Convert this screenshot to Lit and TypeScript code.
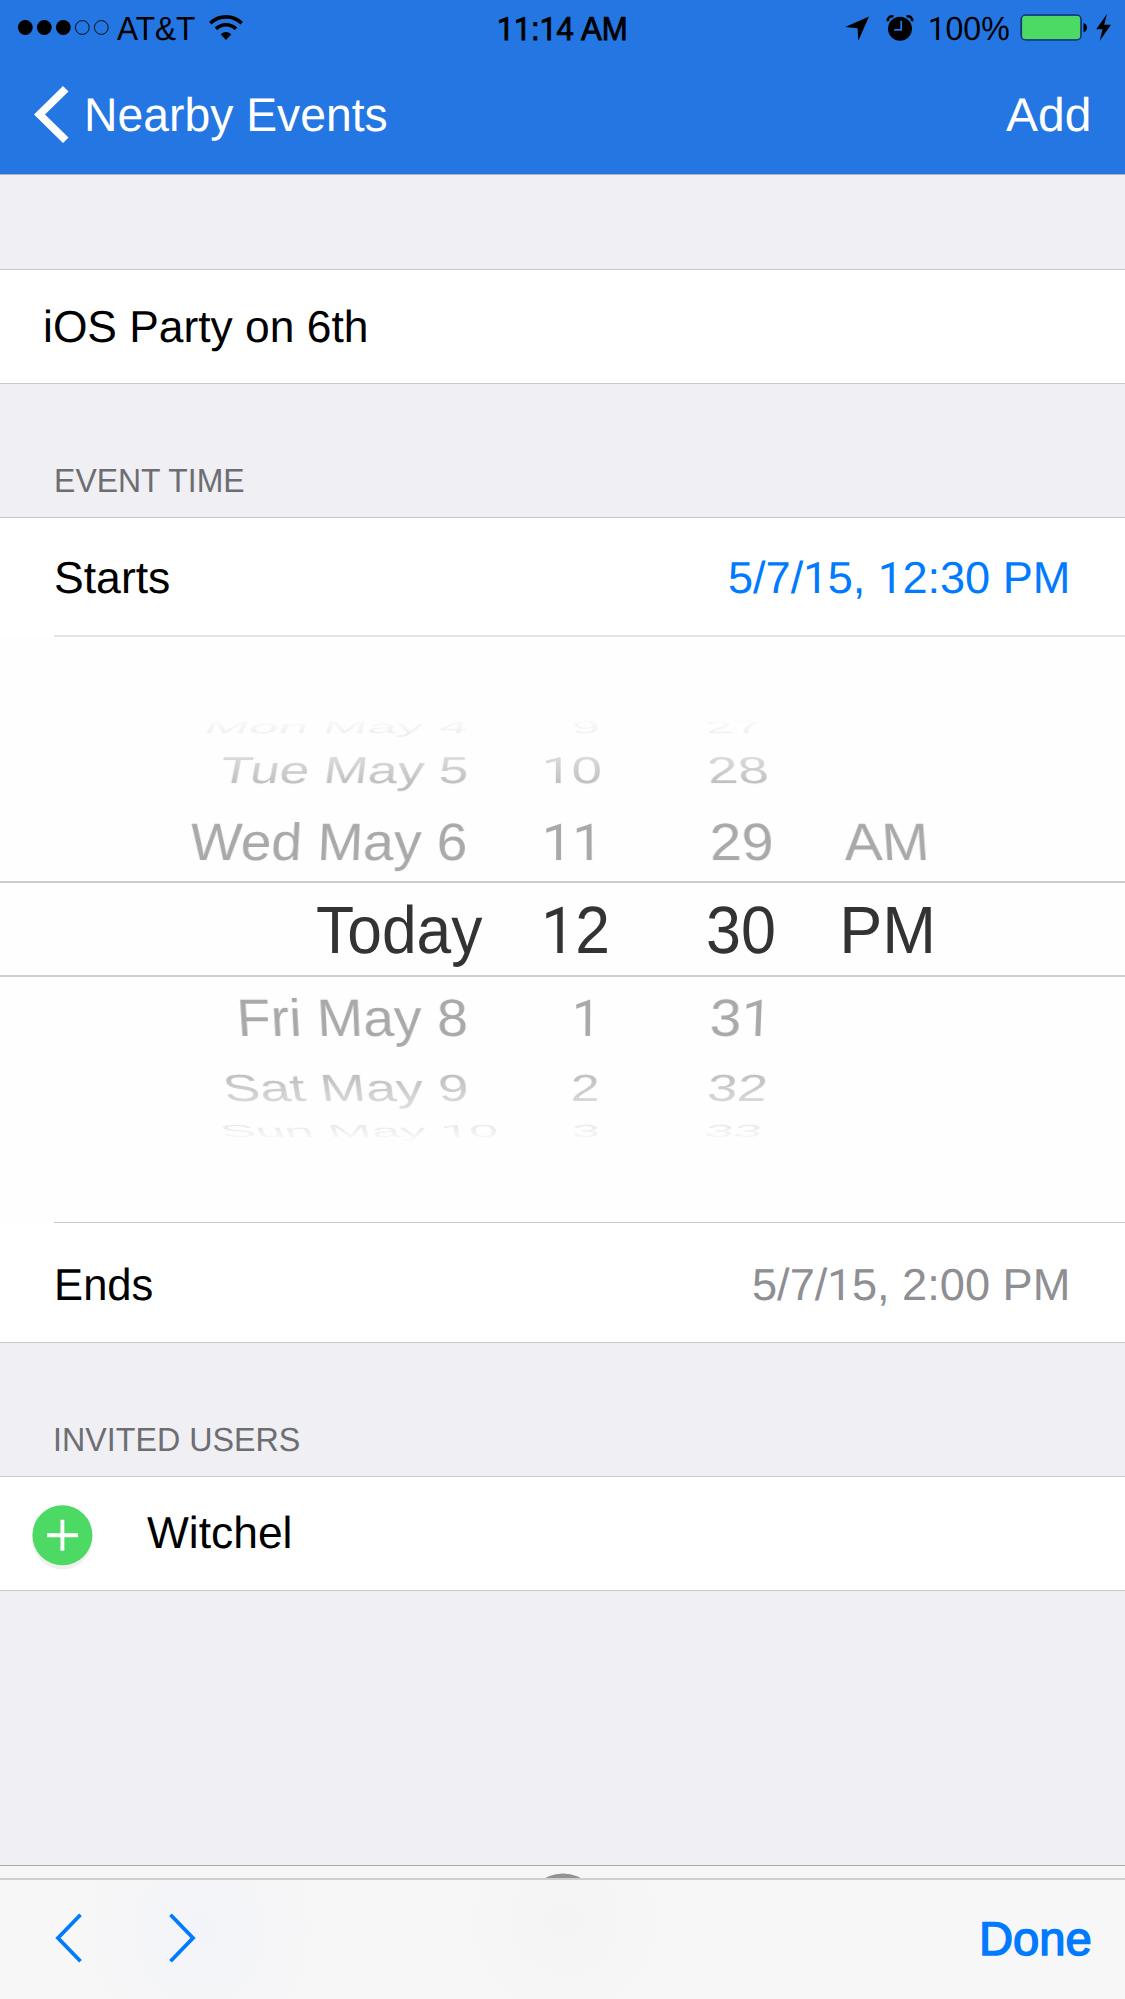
import { LitElement, html, css, svg, nothing } from "lit";
import { customElement, property } from "lit/decorators.js";
import { styleMap } from "lit/directives/style-map.js";

const CAP = 0.688;
const TEXT_FONT = '"Liberation Sans", Arial, sans-serif';
const ONE_FONT = 'Roboto, "Liberation Sans", sans-serif';
const ONE_RATIO = 0.967;

const pen = document.createElement("canvas").getContext("2d")!;
const isOne = (run: string) => run[0] === "1";
const measure = (run: string, size: number): TextMetrics => {
  pen.font = isOne(run) ? `${size * ONE_RATIO}px ${ONE_FONT}` : `${size}px ${TEXT_FONT}`;
  return pen.measureText(run);
};

/** One line of text whose ink fills exactly `width` pixels, with capitals `cap` pixels high. */
@customElement("fit-label")
export class FitLabel extends LitElement {
  @property() text = "";
  @property({ type: Number }) width = 100;
  @property({ type: Number }) cap = 31;

  static styles = css`
    :host { display: block; flex: none; }
    .box { white-space: pre; overflow: visible; }
    .line {
      display: inline-block;
      font-family: "Liberation Sans", Arial, sans-serif;
      transform-origin: 0 50%;
      text-rendering: geometricPrecision;
    }
    .one { font-family: Roboto, "Liberation Sans", sans-serif; font-size: 0.967em; line-height: 0; }
  `;

  render() {
    const size = this.cap / CAP;
    const runs = this.text.split(/(1+)/).filter((r) => r);
    const full = runs.reduce((sum, r) => sum + measure(r, size).width, 0);
    const first = measure(runs[0][0], size);
    const lastRun = runs[runs.length - 1];
    const last = measure(lastRun[lastRun.length - 1], size);
    const left = -first.actualBoundingBoxLeft;
    const right = last.width - last.actualBoundingBoxRight;
    const scale = this.width / (full - left - right);
    return html`<div class="box" style=${styleMap({ width: `${this.width}px`, height: `${size}px`, fontSize: `${size}px`, lineHeight: `${size}px` })}
      ><span class="line" style=${styleMap({ transform: `translateX(${-left * scale}px) scaleX(${scale})` })}
        >${runs.map((r) => (isOne(r) ? html`<span class="one">${r}</span>` : r))}</span
      ></div>`;
  }
}

interface Row { height: number; cap: number; bend: number }
const ROWS: Row[] = [
  { height: 28, cap: 12, bend: -0.0014 },
  { height: 58, cap: 26, bend: -0.0006 },
  { height: 84, cap: 36.2, bend: -0.0002 },
  { height: 92, cap: 46, bend: 0 },
  { height: 84, cap: 36.2, bend: 0.0002 },
  { height: 58, cap: 26, bend: 0.0006 },
  { height: 28, cap: 12, bend: 0.0014 },
];

type Item = [text: string, x: number, width: number] | null;
interface Wheel { start: number; items: Item[] }
const WHEELS: Wheel[] = [
  { start: 0, items: [
    ["Mon May 4", 208, 261], ["Tue May 5", 220, 247], ["Wed May 6", 190, 275], ["Today", 317, 166],
    ["Fri May 8", 241, 224.5], ["Sat May 9", 225.4, 242], ["Sun May 10", 221, 278]] },
  { start: 520, items: [
    ["9", 572.3, 26], ["10", 545.5, 54.5], ["11", 545.5, 46.5], ["12", 546, 61],
    ["1", 576, 15], ["2", 572.3, 26], ["3", 572, 26]] },
  { start: 680, items: [
    ["27", 704.5, 54.5], ["28", 709, 58], ["29", 711.5, 59], ["30", 707.5, 66],
    ["31", 712, 50], ["32", 708.8, 57], ["33", 704.5, 55]] },
  { start: 820, items: [null, null, ["AM", 843.8, 81], ["PM", 844, 87.5], null, null, null] },
];

/** The date and time wheels. */
@customElement("date-wheels")
export class DateWheels extends LitElement {
  static styles = css`
    :host { display: block; background: #fefefe; }
    .frame { position: relative; padding: 77px 0 77px; }
    .wheels {
      display: grid;
      grid-template-columns: 520px 160px 140px 1fr;
      color: #a9a9a9;
      -webkit-mask-image: linear-gradient(#0000 0, #0000000d 8px, #0000002e 20px, #0000006b 44px, #000000c0 70px, #000 105px, #000 335px, #000000bb 362px, #00000073 388px, #0000003a 412px, #00000014 424px, #0000 432px);
      mask-image: linear-gradient(#0000 0, #0000000d 8px, #0000002e 20px, #0000006b 44px, #000000c0 70px, #000 105px, #000 335px, #000000bb 362px, #00000073 388px, #0000003a 412px, #00000014 424px, #0000 432px);
    }
    .cell { display: flex; align-items: center; }
    .chosen { color: #333; }
    .band {
      position: absolute;
      left: 0;
      right: 0;
      top: 244px;
      height: 96px;
      box-sizing: border-box;
      border-top: 2px solid #cdcdcd;
      border-bottom: 2px solid #cdcdcd;
    }
  `;

  private cell(wheel: Wheel, item: Item, i: number) {
    const row = ROWS[i];
    const label = item
      ? html`<fit-label .text=${item[0]} .width=${item[2]} .cap=${row.cap}
          style=${styleMap({
            marginLeft: `${item[1] - wheel.start}px`,
            transformOrigin: `${562 - item[1]}px 50%`,
            transform: row.bend ? `matrix3d(1,0,0,0, 0,1,0,${row.bend}, 0,0,1,0, 0,0,0,1)` : "none",
          })}></fit-label>`
      : nothing;
    return html`<div class="cell ${i === 3 ? "chosen" : ""}" style=${styleMap({ height: `${row.height}px` })}>${label}</div>`;
  }

  render() {
    return html`<div class="frame">
      <div class="band"></div>
      <div class="wheels">
        ${WHEELS.map((w) => html`<div>${w.items.map((item, i) => this.cell(w, item, i))}</div>`)}
      </div>
    </div>`;
  }
}

@customElement("app-root")
export class AppRoot extends LitElement {
  static styles = css`
    :host { display: block; width: 1125px; height: 1999px; overflow: hidden; }
    * { box-sizing: border-box; }
    svg { display: block; flex: none; overflow: visible; }
    .screen { display: flex; flex-direction: column; height: 1999px; background: #efeff4; color: #000; }
    header { height: 174px; background: #2476e2; }
    .status { display: grid; grid-template-columns: 498.5px 346.5px 1fr; height: 57px; align-items: center; }
    .side { display: flex; align-items: center; height: 57px; }
    .signal { margin: -3px 0 0 18px; }
    .carrier { margin-left: 8px; }
    .wifi { margin: -3px 0 0 14px; }
    .medium { -webkit-text-stroke: 0.9px currentColor; }
    .alarm { margin: -2px 0 0 17.5px; }
    .percent { margin-left: 17.5px; }
    .battery { margin: -2px 0 0 11px; }
    .bolt { margin: -2px 0 0 8px; }
    .nav { display: flex; align-items: center; justify-content: space-between; height: 115px; padding: 0 36px 0 33.5px; color: #fff; }
    .nav fit-label { margin-top: 2px; }
    .back { display: flex; align-items: center; gap: 18.5px; }
    .edge { height: 1px; flex: none; background: #c8c7cc; }
    .nav-edge { background: #b2b2b8; }
    .gap { height: 94px; }
    .cell { display: flex; align-items: center; flex: none; background: #fff; }
    .title-cell { height: 113px; padding: 1px 0 0 46px; }
    .section { display: flex; align-items: flex-end; flex: none; height: 133px; padding: 0 0 19.5px 56.3px; color: #6d6d72; }
    .row { justify-content: space-between; padding: 0 58px 0 56px; }
    .starts { height: 117px; padding-top: 4px; color: #000; }
    .ends { height: 119px; padding: 6px 58px 0 57.3px; }
    .blue { color: #007aff; }
    .gray { color: #8e8e93; }
    .inset { height: 1px; flex: none; background: linear-gradient(90deg, #fff 54px, #c8c7cc 54px); }
    .inset.soft { height: 2px; background: linear-gradient(90deg, #fff 54px, #e4e4e5 54px); }
    .picker { height: 585px; overflow: hidden; flex: none; background: #fefefe; }
    .user { height: 113px; padding-left: 32px; gap: 54px; }
    .plus { margin-top: 7px; }
    .fill { flex: 1; }
    .strip { display: flex; justify-content: center; flex: none; height: 13px; border-top: 1px solid #a7a7ac; background: #f6f6f6; overflow: hidden; }
    .knob { margin-top: 6.5px; }
    .tools { display: flex; align-items: center; justify-content: space-between; flex: none; height: 121px; padding: 0 34.5px 0 54.5px;
      background: radial-gradient(ellipse 130px 150px at 200px 50px, #f3f4f9, #f3f4f900), radial-gradient(ellipse 110px 110px at 565px 40px, #f4f4f4, #f4f4f400), #f7f7f7; border-top: 2px solid #cfcfcf; }
    .arrows { display: flex; gap: 87px; margin-top: -3px; }
    .tools .medium { -webkit-text-stroke-width: 1.5px; }
  `;

  private signal() {
    return svg`${[0, 1, 2, 3, 4].map((i) => i < 3
      ? svg`<circle cx=${7.3 + i * 19} cy="7.5" r="7.4" fill="#000"/>`
      : svg`<circle cx=${7.3 + i * 19} cy="7.5" r="6.9" fill="none" stroke="#000" stroke-width="0.9"/>`)}`;
  }

  render() {
    return html`<div class="screen">
      <header>
        <div class="status">
          <div class="side">
            <svg class="signal" width="91" height="15">${this.signal()}</svg>
            <fit-label class="carrier" .text=${"AT&T"} .width=${78} .cap=${23}></fit-label>
            <svg class="wifi" width="34" height="25" viewBox="0 0 34 25">
              <g fill="none" stroke="#000">
                <path d="M1.3 8.3A22.5 22.5 0 0 1 32.7 8.3" stroke-width="3.6"/>
                <path d="M7 13.9A14.3 14.3 0 0 1 27 13.9" stroke-width="3.6"/>
              </g>
              <path d="M17 25L11.7 19.2Q17 15 22.3 19.2Z"/>
            </svg>
          </div>
          <fit-label class="medium" .text=${"11:14 AM"} .width=${128} .cap=${22.7}></fit-label>
          <div class="side">
            <svg width="24" height="25" viewBox="0 0 24 25"><path d="M24 .4L.3 11L12.6 12.3L13.3 24.8Z"/></svg>
            <svg class="alarm" width="26" height="26" viewBox="0 0 26 26">
              <circle cx="13" cy="13.8" r="12"/>
              <path d="M.9 6.2A4.1 4.1 0 0 1 6.4 1.6M25.1 6.2A4.1 4.1 0 0 0 19.6 1.6" fill="none" stroke="#000" stroke-width="2.6"/>
              <path d="M14.2 5.8V14.8H7.2" fill="none" stroke="#2476e2" stroke-width="1.8"/>
            </svg>
            <fit-label class="percent" .text=${"100%"} .width=${79} .cap=${23}></fit-label>
            <svg class="battery" width="68" height="27" viewBox="0 0 68 27">
              <rect x="1.1" y="1" width="60" height="25" rx="4.5" fill="none" stroke="#0b1c30" stroke-width="1.1"/>
              <rect x="2.2" y="2.1" width="57.8" height="22.8" rx="3" fill="#4cd964"/>
              <path d="M63.5 9Q67 10 67 13.7Q67 17 63.5 18Z"/>
            </svg>
            <svg class="bolt" width="15" height="27" viewBox="0 0 15 27"><path d="M11 0L.2 15.3H6.6L3.6 27L15 10.8H8.2Z"/></svg>
          </div>
        </div>
        <div class="nav">
          <div class="back">
            <svg width="35" height="57" viewBox="0 0 35 57"><path d="M0 28.5L29 0L34.5 5.4L11 28.5L34.5 51.6L29 57Z" fill="#fff"/></svg>
            <fit-label .text=${"Nearby Events"} .width=${299} .cap=${32.6}></fit-label>
          </div>
          <fit-label .text=${"Add"} .width=${83} .cap=${32.6}></fit-label>
        </div>
      </header>
      <div class="edge nav-edge"></div>
      <div class="gap"></div>
      <div class="edge"></div>
      <div class="cell title-cell"><fit-label .text=${"iOS Party on 6th"} .width=${319.5} .cap=${30.8}></fit-label></div>
      <div class="edge"></div>
      <div class="section"><fit-label .text=${"EVENT TIME"} .width=${188.5} .cap=${23}></fit-label></div>
      <div class="edge"></div>
      <div class="cell row starts">
        <fit-label .text=${"Starts"} .width=${113} .cap=${30.8}></fit-label>
        <fit-label class="blue" .text=${"5/7/15, 12:30 PM"} .width=${338} .cap=${30.8}></fit-label>
      </div>
      <div class="inset soft"></div>
      <div class="picker"><date-wheels></date-wheels></div>
      <div class="inset"></div>
      <div class="cell row ends">
        <fit-label .text=${"Ends"} .width=${95} .cap=${30.8}></fit-label>
        <fit-label class="gray" .text=${"5/7/15, 2:00 PM"} .width=${314} .cap=${30.8}></fit-label>
      </div>
      <div class="edge"></div>
      <div class="section"><fit-label .text=${"INVITED USERS"} .width=${243} .cap=${23}></fit-label></div>
      <div class="edge"></div>
      <div class="cell user">
        <svg class="plus" width="61" height="65" viewBox="0 0 61 65">
          <circle cx="30.4" cy="34.6" r="30" fill="#f0f0f0"/>
          <circle cx="30.4" cy="30.2" r="30" fill="#4cd964"/>
          <path d="M15 30.2H46M30.4 14.8V45.8" stroke="#fff" stroke-width="3.9"/>
        </svg>
        <fit-label .text=${"Witchel"} .width=${142.5} .cap=${30.8}></fit-label>
      </div>
      <div class="edge"></div>
      <div class="fill"></div>
      <div class="strip"><svg class="knob" width="74" height="74"><circle cx="37" cy="37" r="36.5" fill="#929292"/></svg></div>
      <div class="tools">
        <div class="arrows">
          <svg width="27" height="50" viewBox="0 0 27 50"><path d="M25.5 1.8L3 25L25.5 48.2" fill="none" stroke="#007aff" stroke-width="3.8"/></svg>
          <svg width="27" height="50" viewBox="0 0 27 50"><path d="M1.5 1.8L24 25L1.5 48.2" fill="none" stroke="#007aff" stroke-width="3.8"/></svg>
        </div>
        <fit-label class="blue medium" .text=${"Done"} .width=${108.5} .cap=${32.5}></fit-label>
      </div>
    </div>`;
  }
}
